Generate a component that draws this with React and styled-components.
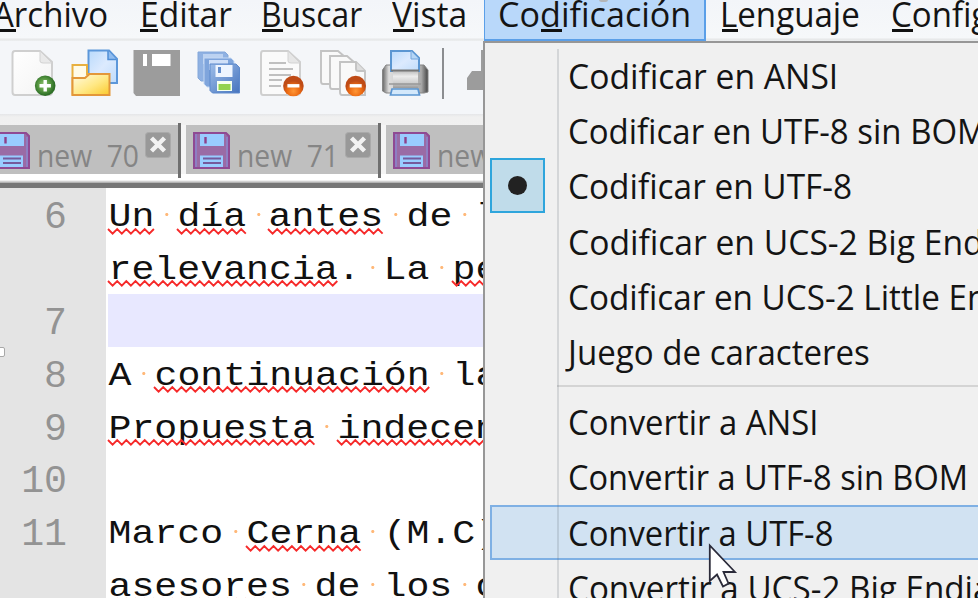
import React, { useLayoutEffect, useRef, useState } from "react";
import styled, { createGlobalStyle, css } from "styled-components";

const CHAR = 22.93;
const LINE = 52.9;

const GlobalStyle = createGlobalStyle`
  * { box-sizing: border-box; }
  body { margin: 0; overflow: hidden; }
`;

const Window = styled.div`
  position: relative;
  width: 978px;
  height: 598px;
  overflow: hidden;
  background: #f4f6f9;
  font-family: "Open Sans", "Noto Sans", sans-serif;
  color: #141414;
`;

/* ---------- text squeezed to a condensed width ---------- */
const FitBox = styled.span`
  display: block;
  flex: none;
  white-space: pre;
`;
const FitInk = styled.span`
  display: inline-block;
  transform-origin: 0 50%;
`;

function Fit({ width, children }) {
  const ref = useRef(null);
  const [scale, setScale] = useState(1);
  useLayoutEffect(() => {
    setScale(width / ref.current.offsetWidth);
  }, [width]);
  return (
    <FitBox style={{ width }}>
      <FitInk ref={ref} style={{ transform: `scaleX(${scale})` }}>{children}</FitInk>
    </FitBox>
  );
}

/* ---------- menu bar ---------- */
const MenuBar = styled.nav`
  display: flex;
  height: 41px;
  margin-left: -21px;
  background: linear-gradient(#f3f5f9, #f6f8fa 38px, #e6e7e8 39px, #eceeef 41px);
`;
const MenuTitle = styled.div`
  position: relative;
  flex: none;
  width: ${(p) => p.$w}px;
  height: 41px;
  padding-left: ${(p) => (p.$active ? 13 : 14)}px;
  font-size: 35px;
  line-height: 28px;
  ${(p) => p.$active && css`
    background: #b9d8fa;
    border: solid #5b9fe8;
    border-width: 0 2px 2px 1px;
  `}
`;
const Mnemonic = styled.span`
  position: absolute;
  left: ${(p) => p.$x}px;
  top: 29px;
  width: ${(p) => p.$w}px;
  height: 2.6px;
  background: #111;
`;
const Nub = styled.span`
  position: absolute;
  left: 114px;
  top: -3px;
  width: 9px;
  height: 4.5px;
  border-radius: 3px;
  background: #b3b5b8;
`;

/* ---------- toolbar ---------- */
const Toolbar = styled.div`
  display: flex;
  gap: 12px;
  height: 73px;
  padding: 8px 0 0 9px;
`;
const ToolIcon = styled.svg`
  display: block;
  flex: none;
  width: 50px;
  height: 50px;
  overflow: visible;
`;
const ToolDivider = styled.span`
  flex: none;
  width: 2px;
  height: 51px;
  margin: -1px 9px 0 -1px;
  background: #8b8d90;
`;

/* ---------- tabs ---------- */
const TabStrip = styled.div`
  display: flex;
  height: 69px;
  padding-top: 11px;
  margin-left: -14px;
  background: linear-gradient(#e5e6e8, #f0f0f0 3px, #f3f3f3 58px, #fff 60px, #fff 66px, #a5a5a5 69px);
`;
const Tab = styled.div`
  position: relative;
  display: flex;
  flex: none;
  width: 200px;
  height: 49px;
  padding: 10px 0 0 7px;
  border-right: 8px solid #f5f5f5;
  background: #bfbfbf;
  color: #858585;
  font-size: 31px;
  line-height: 41px;
`;
const TabEdge = styled.span`
  position: absolute;
  right: -3px;
  top: -2px;
  width: 3px;
  height: 55px;
  background: #6f6f6f;
`;
const Disk = styled.svg`
  flex: none;
  width: 37px;
  height: 37px;
  margin: -3px 7px 0 0;
`;
const CloseBox = styled.svg`
  flex: none;
  width: 26px;
  height: 26px;
  margin: -3px 0 0 6px;
`;

/* ---------- editor ---------- */
const Editor = styled.main`
  height: 415px;
  border-top: 5px solid #777;
  background: #fff;
`;
const Row = styled.div`
  display: flex;
  height: ${LINE}px;
`;
const Gutter = styled.div`
  flex: none;
  width: 105.5px;
  padding-right: 38.5px;
  margin-right: 2.5px;
  background: #e4e4e4;
  color: #939393;
  font: 38.2px/60px "Liberation Mono", monospace;
  text-align: right;
`;
const Code = styled.div`
  display: flex;
  flex: 1;
  background: ${(p) => (p.$current ? "#e8e8ff" : "#fff")};
  font: 33.5px/${LINE}px "Liberation Mono", monospace;
  color: #111;
`;
const Word = styled.span`
  position: relative;
  flex: none;
  width: ${(p) => p.$n * CHAR}px;
  white-space: pre;
`;
const WordInk = styled.span`
  display: inline-block;
  transform: translate(0.5px, 3px) scaleX(1.1407);
  transform-origin: 0 0;
`;
const Wave = styled.svg`
  position: absolute;
  left: 0;
  top: 38.5px;
  width: 100%;
  height: 8px;
  overflow: visible;
`;
const Space = styled.span`
  flex: none;
  width: ${CHAR}px;
  background: radial-gradient(circle at 12.8px 26.5px, #ffb878 1.1px, transparent 2px);
`;
const Handle = styled.span`
  position: absolute;
  left: -4px;
  top: 347px;
  width: 9px;
  height: 10px;
  border: 1px solid #a8a8a8;
  border-radius: 2px;
  background: #fff;
`;

/* ---------- dropdown ---------- */
const Dropdown = styled.div`
  position: absolute;
  left: 483px;
  top: 40.5px;
  width: 520px;
  height: 580px;
  padding: 5.6px 0 0 5px;
  border: solid #979797;
  border-width: 2px 0 0 2px;
  background: #f0f0f0;
`;
const GutterLine = styled.span`
  position: absolute;
  left: 72px;
  top: 6px;
  bottom: 0;
  width: 2px;
  background: rgba(90, 100, 110, 0.18);
`;
const Item = styled.div`
  display: flex;
  height: 55.2px;
  padding-left: 77.5px;
  font-size: 35.5px;
  line-height: 54.5px;
  ${(p) => p.$hover && css`
    background: #d1e2f2;
    box-shadow: inset 0 0 0 2px #7fb0e4;
  `}
`;
const CheckCell = styled.span`
  display: flex;
  flex: none;
  align-items: center;
  justify-content: center;
  width: 55px;
  height: 55px;
  margin: 0 22.5px 0 -77.5px;
  border: 2px solid #2ea5dc;
  background: #c0dcea;

  &::after {
    content: "";
    width: 19px;
    height: 19px;
    border-radius: 50%;
    background: #222;
  }
`;
const Separator = styled.div`
  height: 2px;
  margin: 6px 0 7px 67px;
  background: #d4d4d4;
`;
const Cursor = styled.svg`
  position: absolute;
  left: 706px;
  top: 542px;
  width: 34px;
  height: 48px;
`;

const menus = [
  { label: "Archivo", w: 147, fit: 115, u: [20, 17] },
  { label: "Editar", w: 121, fit: 92, u: [14, 18] },
  { label: "Buscar", w: 131, fit: 101, u: [15, 21] },
  { label: "Vista", w: 106, fit: 75, u: [15, 21] },
  { label: "Codificación", w: 222, fit: 193, u: [56, 21], active: true },
  { label: "Lenguaje", w: 171, fit: 140, u: [16, 16] },
  { label: "Configuración", w: 240, fit: 215, u: [15, 21] },
];

const items = [
  ["Codificar en ANSI", 270],
  ["Codificar en UTF-8 sin BOM", 419],
  ["Codificar en UTF-8", 284, "checked"],
  ["Codificar en UCS-2 Big Endian", 463],
  ["Codificar en UCS-2 Little Endian", 487],
  ["Juego de caracteres", 302],
  null,
  ["Convertir a ANSI", 251],
  ["Convertir a UTF-8 sin BOM", 400],
  ["Convertir a UTF-8", 265, "hover"],
  ["Convertir a UCS-2 Big Endian", 444],
];

/* "~" in front of a word marks it as misspelled */
const lines = [
  [6, "~Un ~día ~antes de la"],
  ["", "~relevancia|. La ~persona"],
  [7, "", true],
  [8, "A ~continuación la"],
  [9, "~Propuesta ~indecente"],
  [10, ""],
  [11, "Marco ~Cerna (M.C)"],
  ["", "~asesores de ~los ~cu"],
];

function zigzag(n) {
  const w = n * CHAR;
  const pts = [];
  for (let i = 0, x = 0; x <= w + 1; i++, x += 4.586) pts.push(`${x.toFixed(1)},${i % 2 ? 6.6 : 2}`);
  return pts.join(" ");
}

function CodeLine({ text }) {
  if (!text) return null;
  return text.split(" ").map((chunk, i) => (
    <React.Fragment key={i}>
      {i > 0 && <Space />}
      {chunk.split("|").map((part, j) => {
        const bad = part.startsWith("~");
        const word = bad ? part.slice(1) : part;
        return (
          <Word key={j} $n={word.length}>
            <WordInk>{word}</WordInk>
            {bad && (
              <Wave><polyline points={zigzag(word.length)} fill="none" stroke="#f62a2a" strokeWidth="1.9" /></Wave>
            )}
          </Word>
        );
      })}
    </React.Fragment>
  ));
}

function FloppyIcon() {
  return (
    <Disk viewBox="0 0 37 37">
      <path d="M1 1H33L36 4V36H1Z" fill="#9a6ba5" stroke="#8f4a93" strokeWidth="2" />
      <path d="M3 2V35M34 5V35" stroke="#8a86cc" strokeWidth="1.5" />
      <path d="M7 2H31V14H7Z" fill="#99ccff" />
      <path d="M12.5 5V11.5" stroke="#8c3f8c" strokeWidth="2.4" />
      <path d="M7 23.5H30V35H7Z" fill="#99ccff" />
      <path d="M10 26.5H28M10 31H28" stroke="#75599c" strokeWidth="2.2" />
    </Disk>
  );
}

function TabClose() {
  return (
    <CloseBox viewBox="0 0 26 26">
      <rect x=".5" y=".5" width="25" height="25" rx="3" fill="#999" stroke="#aaa" />
      <path d="M6.5 6L19.5 19M19.5 6L6.5 19" stroke="#f2f2f2" strokeWidth="4.4" />
    </CloseBox>
  );
}

function Minus({ cx }) {
  return (
    <g>
      <circle cx={cx} cy="37" r="10.3" fill="url(#orange)" />
      <path d={`M${cx - 6} 36.8h12`} stroke="#fff" strokeWidth="3.4" />
    </g>
  );
}

function Defs() {
  return (
    <defs>
      <linearGradient id="paper" x2="1" y2="1"><stop offset="0" stopColor="#fff" /><stop offset="1" stopColor="#f3f3f3" /></linearGradient>
      <radialGradient id="green" cx=".45" cy=".45"><stop offset="0" stopColor="#9bc77b" /><stop offset=".55" stopColor="#5c9c45" /><stop offset="1" stopColor="#2f7028" /></radialGradient>
      <radialGradient id="orange" cx=".5" cy=".75"><stop offset="0" stopColor="#ff9635" /><stop offset=".6" stopColor="#ec6a12" /><stop offset="1" stopColor="#bf4b16" /></radialGradient>
      <linearGradient id="bluepaper" x2="1" y2="1"><stop offset="0" stopColor="#b9dafc" /><stop offset=".5" stopColor="#dceafe" /><stop offset="1" stopColor="#bfdcfb" /></linearGradient>
      <linearGradient id="folder" x2="1" y2="1"><stop offset="0" stopColor="#fffbe5" /><stop offset=".55" stopColor="#ffe884" /><stop offset="1" stopColor="#fac92c" /></linearGradient>
      <linearGradient id="disk" x2="1" y2="1"><stop offset="0" stopColor="#9dbde9" /><stop offset="1" stopColor="#4674be" /></linearGradient>
      <linearGradient id="metal" x2="0" y2="1"><stop offset="0" stopColor="#b5b5b5" /><stop offset=".35" stopColor="#ececec" /><stop offset=".7" stopColor="#cfcfcf" /><stop offset="1" stopColor="#9a9a9a" /></linearGradient>
      <linearGradient id="drum" x2="1" y2="0"><stop offset="0" stopColor="#666" /><stop offset=".14" stopColor="#ddd" /><stop offset=".85" stopColor="#aaa" /><stop offset="1" stopColor="#444" /></linearGradient>
    </defs>
  );
}

function NewIcon() {
  return (
    <ToolIcon viewBox="0 0 50 50">
      <Defs />
      <path d="M6 2H31L43 13V43Q43 46 40 46H6Q3.5 46 3.5 43V5Q3.5 2 6 2Z" fill="url(#paper)" stroke="#cfcfcf" strokeWidth="2" />
      <path d="M31 2V12Q31 14 34 14H43Z" fill="#e9e9e9" stroke="#d2d2d2" />
      <circle cx="36.2" cy="36.8" r="10.3" fill="url(#green)" />
      <path d="M30.5 36.8h11.4M36.2 31.1v11.4" stroke="#fff" strokeWidth="3.4" />
    </ToolIcon>
  );
}

function OpenIcon() {
  return (
    <ToolIcon viewBox="0 0 50 50">
      <path d="M17.5 1.5H38L46 10V34H17.5Z" fill="url(#bluepaper)" stroke="#5c97da" strokeWidth="2" />
      <path d="M37 2V10.5H45" fill="#8fbcf0" stroke="#4f8ed6" strokeWidth="1.5" />
      <path d="M1.5 16H16V25H38V45.5H1.5Z" fill="#fffbe8" stroke="#e8b040" strokeWidth="2" />
      <path d="M1.5 32V29H14L18.5 25H38.5V46H1.5Z" fill="url(#folder)" stroke="#e3973a" strokeWidth="2" />
    </ToolIcon>
  );
}

function SaveIcon() {
  return (
    <ToolIcon viewBox="0 0 50 50">
      <path d="M.5 1H47V47H3L.5 44Z" fill="#9c9c9c" />
      <path d="M10 5H14V17H10ZM19 5H37.5V17H19Z" fill="#fff" />
    </ToolIcon>
  );
}

function SaveAllIcon() {
  return (
    <ToolIcon viewBox="0 0 50 50">
      <path d="M3 3H30L33 6V32H6L3 29Z" fill="#8fb1e2" stroke="#84a8da" />
      <path d="M8 5H28V15H8Z" fill="#bcd2f1" />
      <path d="M9 9H36L39 12V38H12L9 35Z" fill="#7fa5dc" stroke="#c4d8f3" />
      <path d="M14 11H33V21H14Z" fill="#d0e0f8" />
      <path d="M15 15H41L44.5 18.5V44H17.5L15 41.5Z" fill="url(#disk)" stroke="#5d89cc" />
      <path d="M20.5 16H37.5V28H20.5Z" fill="#eef5ff" />
      <path d="M24.5 18V24" stroke="#648ecc" strokeWidth="3" />
      <path d="M22 32H37V42H22Z" fill="#f5fff0" />
      <path d="M23.5 35H35.5V41H23.5Z" fill="#92d24f" />
    </ToolIcon>
  );
}

function CloseIcon() {
  return (
    <ToolIcon viewBox="0 0 50 50">
      <path d="M6 2H31L43 13V43Q43 46 40 46H6Q4 46 4 43V5Q4 2 6 2Z" fill="#fafafa" stroke="#cfcfcf" strokeWidth="2" />
      <path d="M31 2V12Q31 14 34 14H43Z" fill="#e6e6e6" stroke="#d2d2d2" />
      <path d="M12 14H29M12 20H36M12 26H34M12 31H25M12 37H24" stroke="#c0c0c0" strokeWidth="2.2" />
      <Minus cx={36.4} />
    </ToolIcon>
  );
}

function CloseAllIcon() {
  return (
    <ToolIcon viewBox="0 0 50 50">
      <g fill="#f9f9f9" stroke="#c3c3c3" strokeWidth="1.9">
        <path d="M2 2H19L26 8V35H4Q2 35 2 32Z" />
        <path d="M11 7H28L36 14V40H13Q11 40 11 37Z" />
        <path d="M21 13H37L46 22V46H23Q21 46 21 43Z" />
        <path d="M37 13V20Q37 22 39 22H46" fill="#ddd" />
      </g>
      <Minus cx={36.7} />
    </ToolIcon>
  );
}

function PrintIcon() {
  return (
    <ToolIcon viewBox="0 0 50 50">
      <path d="M5 16H43L47 21V43L43 44H5L1.5 42V21Z" fill="url(#drum)" stroke="#858585" />
      <path d="M10 2H31L38 9V22H10Z" fill="url(#bluepaper)" stroke="#5b96d2" strokeWidth="2" />
      <path d="M30 2V10H38" fill="#b5d6f6" stroke="#74a6dc" />
      <path d="M12 21H37V39H12Z" fill="url(#metal)" />
      <path d="M10 21.5H38" stroke="#777" strokeWidth="2" />
      <path d="M8 35H40" stroke="#999" strokeWidth="1.5" />
      <path d="M11 40H37L38.5 46H9.5Z" fill="#d3e8fb" stroke="#5b96d2" strokeWidth="1.7" />
    </ToolIcon>
  );
}

export default function App() {
  return (
    <Window>
      <GlobalStyle />
      <MenuBar>
        {menus.map((m) => (
          <MenuTitle key={m.label} $w={m.w} $active={m.active}>
            <Fit width={m.fit}>{m.label}</Fit>
            <Mnemonic $x={m.u[0]} $w={m.u[1]} />
            {m.active && <Nub />}
          </MenuTitle>
        ))}
      </MenuBar>
      <Toolbar>
        <NewIcon />
        <OpenIcon />
        <SaveIcon />
        <SaveAllIcon />
        <CloseIcon />
        <CloseAllIcon />
        <PrintIcon />
        <ToolDivider />
        <ToolIcon viewBox="0 0 50 50"><path d="M2 41V29L7 22H16V1H40V41Z" fill="#9c9c9c" /></ToolIcon>
      </Toolbar>
      <TabStrip>
        {["new  70", "new  71", "new  72"].map((name) => (
          <Tab key={name}>
            <FloppyIcon />
            <Fit width={102}>{name}</Fit>
            <TabClose />
            <TabEdge />
          </Tab>
        ))}
      </TabStrip>
      <Editor>
        {lines.map(([num, text, current], i) => (
          <Row key={i}>
            <Gutter>{num}</Gutter>
            <Code $current={current}><CodeLine text={text} /></Code>
          </Row>
        ))}
      </Editor>
      <Handle />
      <Dropdown>
        {items.map((item, i) =>
          item ? (
            <Item key={i} $hover={item[2] === "hover"}>
              {item[2] === "checked" && <CheckCell />}
              <Fit width={item[1]}>{item[0]}</Fit>
            </Item>
          ) : (
            <Separator key={i} />
          )
        )}
        <GutterLine />
      </Dropdown>
      <Cursor viewBox="0 0 34 48">
        <path d="M3.8 3.5V39L11 32.5L17 44.5L22.5 41.5L17.5 30H29Z" fill="#fff" stroke="#2b2b3a" strokeWidth="1.8" />
      </Cursor>
    </Window>
  );
}
